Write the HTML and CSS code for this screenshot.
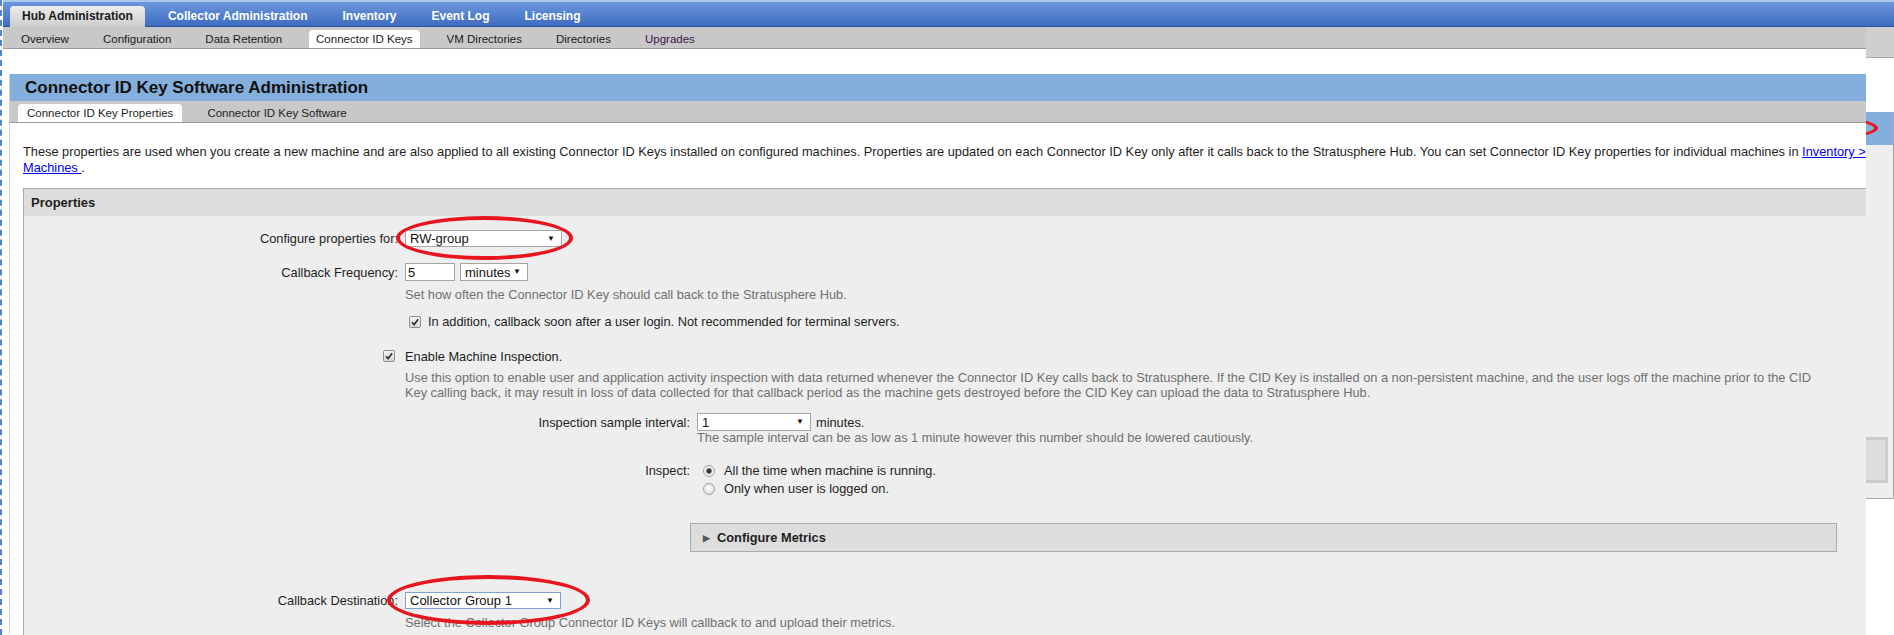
FILE: index.html
```html
<!DOCTYPE html>
<html lang="en">
<head>
    <meta charset="UTF-8">
    <meta name="viewport" content="width=device-width, initial-scale=1.0">
    <title>Connector ID Key Software Administration</title>
    <link rel="stylesheet" href="styles.css">
</head>
<body>
<div class="page">
    <ul class="top-nav">
        <li class="active">Hub Administration</li>
        <li>Collector Administration</li>
        <li>Inventory</li>
        <li>Event Log</li>
        <li>Licensing</li>
    </ul>

    <div class="frame">
        <div class="main">
            <ul class="sub-nav">
                <li>Overview</li>
                <li>Configuration</li>
                <li>Data Retention</li>
                <li class="active">Connector ID Keys</li>
                <li>VM Directories</li>
                <li>Directories</li>
                <li class="visited">Upgrades</li>
            </ul>

            <div class="content">
                <h1 class="page-title">Connector ID Key Software Administration</h1>
                <ul class="tabs">
                    <li class="active">Connector ID Key Properties</li>
                    <li>Connector ID Key Software</li>
                </ul>

                <div class="tab-body">
                    <p class="intro">These properties are used when you create a new machine and are also applied to all existing Connector ID Keys installed on configured machines. Properties are updated on each Connector ID Key only after it calls back to the Stratusphere Hub. You can set Connector ID Key properties for individual machines in <a href="#">Inventory &gt; Machines </a>.</p>

                    <div class="properties">
                        <h2>Properties</h2>
                        <div class="props-body">

                            <!-- which group the settings apply to -->
                            <div class="row row-first">
                                <label>Configure properties for:</label>
                                <div>
                                    <span class="select circled circled-a" style="width: 157px">
                                        <select><option>RW-group</option></select>
                                    </span>
                                </div>
                            </div>

                            <div class="row row-freq">
                                <label>Callback Frequency:</label>
                                <div class="inline">
                                    <input class="text-input" type="text" value="5">
                                    <span class="select" style="width: 68px">
                                        <select><option>minutes</option></select>
                                    </span>
                                </div>
                            </div>
                            <p class="hint indent hint-freq">Set how often the Connector ID Key should call back to the Stratusphere Hub.</p>

                            <div class="check-line">
                                <span class="check"><svg width="10" height="10" viewBox="0 0 10 10"><path d="M2 5.2 L4.1 7.6 L8.2 2.2" fill="none" stroke="#333" stroke-width="1.7"/></svg></span>
                                <span>In addition, callback soon after a user login. Not recommended for terminal servers.</span>
                            </div>

                            <div class="row row-enable">
                                <div class="check-cell">
                                    <span class="check"><svg width="10" height="10" viewBox="0 0 10 10"><path d="M2 5.2 L4.1 7.6 L8.2 2.2" fill="none" stroke="#333" stroke-width="1.7"/></svg></span>
                                </div>
                                <div>Enable Machine Inspection.</div>
                            </div>
                            <p class="hint indent hint-desc">Use this option to enable user and application activity inspection with data returned whenever the Connector ID Key calls back to Stratusphere. If the CID Key is installed on a non-persistent machine, and the user logs off the machine prior to the CID Key calling back, it may result in loss of data collected for that callback period as the machine gets destroyed before the CID Key can upload the data to Stratusphere Hub.</p>

                            <div class="inspect-block">
                                <div class="sub-row sub-interval">
                                    <label>Inspection sample interval:</label>
                                    <div class="inline">
                                        <span class="select" style="width: 114px">
                                            <select><option>1</option></select>
                                        </span>
                                        <span>minutes.</span>
                                    </div>
                                </div>
                                <p class="hint hint-sample">The sample interval can be as low as 1 minute however this number should be lowered cautiously.</p>

                                <div class="sub-row sub-inspect">
                                    <label>Inspect:</label>
                                    <div class="radios">
                                        <div class="radio-line"><span class="radio on"></span>All the time when machine is running.</div>
                                        <div class="radio-line"><span class="radio"></span>Only when user is logged on.</div>
                                    </div>
                                </div>

                                <div class="metrics">
                                    <span class="arrow">&#9654;</span>
                                    <span>Configure Metrics</span>
                                </div>
                            </div>

                            <div class="row row-dest">
                                <label>Callback Destination:</label>
                                <div>
                                    <span class="select select-focus circled circled-b" style="width: 156px">
                                        <select><option>Collector Group 1</option></select>
                                    </span>
                                </div>
                            </div>
                            <p class="hint indent hint-dest">Select the Collector Group Connector ID Keys will callback to and upload their metrics.</p>

                        </div>
                    </div>
                </div>
            </div>
        </div>

        <!-- edge of the window behind -->
        <div class="ghost">
            <div class="g-subnav"></div>
            <div class="g-gap"></div>
            <div class="g-head"></div>
            <div class="g-panel">
                <div class="g-button"></div>
            </div>
        </div>
    </div>
</div>
</body>
</html>
```

FILE: styles.css
```css
body {
    margin: 0;
    font-family: "Liberation Sans", Arial, sans-serif;
    font-size: 12.8px;
    color: #1e1e1e;
    background: #fff;
    overflow: hidden;
}

.page {
    height: 635px;
    border-left: 2px dashed #4a86d4;
    padding-left: 1px;
}

/* Top navigation */
.top-nav {
    list-style: none;
    margin: 0;
    padding: 0 0 0 7px;
    display: flex;
    align-items: flex-end;
    gap: 11px;
    height: 25px;
    border-top: 2px solid #a9c7ea;
    background: linear-gradient(#6b97dc, #3d6abf);
    box-shadow: inset 0 -1px 0 #2b539b;
}

.top-nav li {
    padding: 0 12px;
    height: 21px;
    line-height: 21px;
    font-size: 12px;
    font-weight: bold;
    color: #fff;
}

.top-nav li.active {
    background: linear-gradient(#ececec, #cdcdcd);
    color: #1a1a1a;
    border-radius: 4px 4px 0 0;
}

.frame {
    display: flex;
    height: 608px;
}

.main {
    width: 1863px;
    flex-shrink: 0;
    overflow: hidden;
}

.sub-nav {
    list-style: none;
    margin: 0;
    padding: 0 0 0 11px;
    display: flex;
    align-items: flex-end;
    gap: 20px;
    height: 21px;
    background: #c8c8c8;
    border-bottom: 1px solid #999;
}

.sub-nav li {
    padding: 0 7px;
    height: 18px;
    line-height: 18px;
    font-size: 11.5px;
    color: #1a1a1a;
}

.sub-nav li.active {
    background: #fff;
    border-radius: 4px 4px 0 0;
}

.sub-nav li.visited {
    color: #3b1846;
}

/* Page content */
.content {
    margin: 25px 0 0 6px;
    border-left: 1px solid #cfcfcf;
    height: 560px;
}

.page-title {
    margin: 0;
    height: 27px;
    line-height: 27px;
    padding-left: 15px;
    background: #84aedb;
    font-size: 17px;
    font-weight: bold;
    color: #111;
}

.tabs {
    list-style: none;
    margin: 0;
    padding: 0 0 0 8px;
    display: flex;
    align-items: flex-end;
    gap: 16px;
    height: 21px;
    background: #c8c8c8;
    border-bottom: 1px solid #999;
}

.tabs li {
    padding: 0 9px;
    height: 18px;
    line-height: 18px;
    font-size: 11.5px;
}

.tabs li.active {
    background: #fff;
    border-radius: 4px 4px 0 0;
}

.tab-body {
    padding: 21px 0 0 13px;
}

.intro {
    margin: 0;
    width: 1880px;
    line-height: 16px;
}

.intro a {
    color: #0000ee;
}

.properties {
    margin-top: 12px;
    width: 1880px;
    border: 1px solid #aaa;
}

.properties h2 {
    margin: 0;
    height: 27px;
    line-height: 27px;
    padding-left: 7px;
    background: #ddd;
    font-size: 13px;
}

.props-body {
    background: #eee;
    padding: 14px 0 60px;
}

/* Form rows */
.row {
    display: grid;
    grid-template-columns: 374px auto;
    column-gap: 7px;
    align-items: center;
}

.row label,
.sub-row label {
    text-align: right;
}

.row-first { height: 17px; }
.row-freq { height: 18px; margin-top: 16px; }
.row-enable { height: 16px; margin-top: 18px; }
.row-dest { height: 17px; margin-top: 40px; }

.inline {
    display: flex;
    align-items: center;
    gap: 5px;
}

.indent {
    margin-left: 381px;
}

.hint {
    margin-top: 0;
    margin-bottom: 0;
    color: #707070;
    line-height: 16px;
}

.hint-freq { margin-top: 6px; }
.hint-dest { margin-top: 6px; }

.hint-desc {
    margin-top: 6px;
    line-height: 15px;
    width: 1425px;
}

.select {
    position: relative;
    display: inline-block;
    box-sizing: border-box;
    height: 17px;
    border: 1px solid #a5a5a5;
    background: #fff;
}

.row-freq .select,
.sub-interval .select {
    height: 18px;
}

.select select {
    appearance: none;
    -webkit-appearance: none;
    display: block;
    width: 100%;
    height: 100%;
    margin: 0;
    padding: 0 0 0 4px;
    border: none;
    background: transparent;
    font-family: "Liberation Sans", Arial, sans-serif;
    font-size: 13px;
    color: #111;
}

.select::after {
    content: "\25BC";
    position: absolute;
    right: 6px;
    top: 3px;
    font-size: 8px;
    color: #111;
    pointer-events: none;
}

.select-focus {
    border-color: #7fa3d3;
}

.text-input {
    box-sizing: border-box;
    width: 50px;
    height: 18px;
    margin: 0;
    padding: 0 2px;
    border: 1px solid #a5a5a5;
    font-family: "Liberation Sans", Arial, sans-serif;
    font-size: 13px;
    color: #111;
}

/* Red marker circles drawn on the screenshot */
.circled::before {
    content: "";
    position: absolute;
    border: 4px solid #e8141e;
    border-radius: 50%;
    pointer-events: none;
    z-index: 2;
}

.circled-a::before {
    left: -10px;
    right: -12px;
    top: -15px;
    bottom: -14px;
}

.circled-b::before {
    left: -19px;
    right: -30px;
    top: -18px;
    bottom: -17px;
}

.check {
    display: inline-flex;
    align-items: center;
    justify-content: center;
    box-sizing: border-box;
    width: 12px;
    height: 12px;
    border: 1px solid #8e8e8e;
    border-radius: 2px;
    background: linear-gradient(#f6f6f6, #d6d6d6);
}

.check-line {
    display: flex;
    align-items: center;
    gap: 7px;
    margin: 11px 0 0 385px;
    line-height: 16px;
}

.check-cell {
    display: flex;
    justify-content: flex-end;
    padding-right: 3px;
}

/* Inspection options */
.inspect-block {
    margin-left: 381px;
}

.sub-row {
    display: grid;
    grid-template-columns: 285px auto;
    column-gap: 7px;
    align-items: center;
}

.sub-interval {
    height: 18px;
    margin-top: 13px;
}

.hint-sample {
    margin-left: 292px;
    line-height: 14px;
}

.sub-inspect {
    margin-top: 17px;
    align-items: start;
    line-height: 18px;
}

.radios {
    padding-left: 6px;
}

.radio-line {
    display: flex;
    align-items: center;
    gap: 9px;
}

.radio {
    box-sizing: border-box;
    width: 12px;
    height: 12px;
    border: 1px solid #a0a0a0;
    border-radius: 50%;
    background: radial-gradient(circle at 45% 40%, #fff, #d4d4d4);
}

.radio.on {
    background: radial-gradient(circle, #3a3a3a 0 1.8px, #8a8a8a 2.6px, #e6e6e6 3.4px, #fafafa 5px);
}

.metrics {
    display: flex;
    align-items: center;
    gap: 7px;
    box-sizing: border-box;
    width: 1147px;
    height: 29px;
    margin: 25px 0 0 285px;
    padding-left: 12px;
    border: 1px solid #aaa;
    background: #ddd;
    font-weight: bold;
}

.metrics .arrow {
    font-size: 9px;
    color: #555;
}

/* Strip of the window behind on the right */
.ghost {
    flex: 1;
    overflow: hidden;
}

.g-subnav {
    height: 30px;
    background: #cfcfcf;
    border-bottom: 1px solid #a8a8a8;
}

.g-gap {
    height: 54px;
}

.g-head {
    position: relative;
    height: 33px;
    background: #84aedb;
    border-right: 1px solid #aaa;
    overflow: hidden;
}

.g-head::after {
    content: "";
    position: absolute;
    left: -150px;
    width: 154px;
    top: 2px;
    height: 20px;
    border: 4px solid #e8141e;
    border-radius: 50%;
}

.g-panel {
    height: 354px;
    background: #eee;
    border-right: 1px solid #aaa;
    border-bottom: 1px solid #aaa;
    padding-top: 292px;
    box-sizing: border-box;
}

.g-button {
    width: 19px;
    height: 40px;
    border: 3px solid #ccc;
    border-left: none;
    background: #ddd;
}
```
